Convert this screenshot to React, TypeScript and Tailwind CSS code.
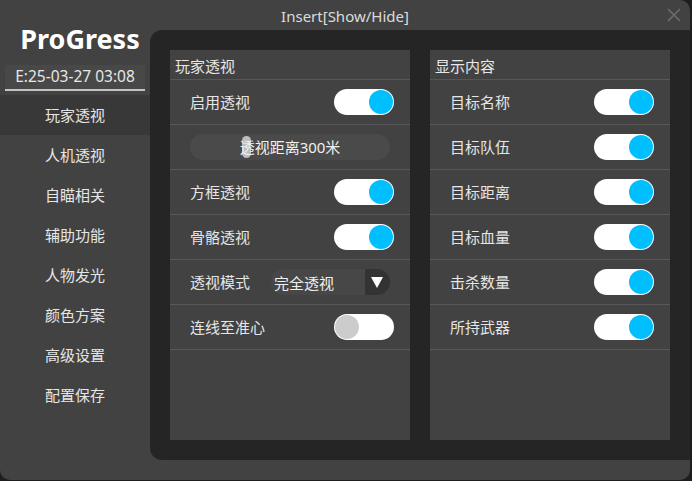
import { useState } from 'react';

const FONT = "font-['Noto_Sans','Noto_Sans_CJK_SC',sans-serif]";

const navItems = ['玩家透视', '人机透视', '自瞄相关', '辅助功能', '人物发光', '颜色方案', '高级设置', '配置保存'];

const displayItems = ['目标名称', '目标队伍', '目标距离', '目标血量', '击杀数量', '所持武器'];

// 开关
function Toggle({ on, onChange }: { on: boolean; onChange: () => void }) {
  return (
    <button
      onClick={onChange}
      className={`flex w-[60px] h-[26px] items-center rounded-full bg-white px-px ${on ? 'justify-end' : 'justify-start'}`}
    >
      <span className={`block w-[24px] h-[24px] rounded-full ${on ? 'bg-[#00bfff]' : 'bg-[#cccccc]'}`} />
    </button>
  );
}

function Row({ children }: { children: React.ReactNode }) {
  return (
    <div className="flex h-[45px] items-center justify-between border-b border-[#575757] pl-[20px] pr-[16px]">
      {children}
    </div>
  );
}

function Card({ title, children }: { title: string; children: React.ReactNode }) {
  return (
    <div className="flex-1 bg-[#424242]">
      <div className="flex h-[30px] items-center border-b border-[#575757] pl-[5px] pt-[3px] text-[15px] text-[#e8e8e8]">
        {title}
      </div>
      {children}
    </div>
  );
}

export default function App() {
  const [active, setActive] = useState(0);
  const [esp, setEsp] = useState({ enable: true, box: true, bone: true, line: false });
  const [shown, setShown] = useState<boolean[]>(displayItems.map(() => true));

  return (
    <div className={`w-[692px] h-[481px] bg-[#1c1e21] ${FONT}`}>
      <div className="relative flex w-[690px] h-[480px] rounded-tr-[10px] rounded-b-[10px] bg-[#424242]">
        {/* 标题栏 */}
        <div className="absolute left-0 right-0 top-[6px] text-center text-[15px] leading-[20px] text-[#dcdcdc]">
          Insert[Show/Hide]
        </div>

        {/* 左侧菜单 */}
        <div className="flex w-[150px] flex-col">
          <div className="pt-[22px] pl-[10px] text-center text-[27px] font-bold leading-[34px] text-white">ProGress</div>
          <div className="mx-[5px] mt-[9px] flex h-[26px] items-center justify-center border-b-2 border-[#c4c4c4] bg-[#484848] text-[15.5px] text-[#e6e6e6]">
            E:25-03-27 03:08
          </div>
          <div className="mt-[4px] flex flex-col">
            {navItems.map((item, i) => (
              <button
                key={item}
                onClick={() => setActive(i)}
                className={`h-[40px] text-center text-[15px] text-[#e6e6e6] ${i === active ? 'bg-[#383838]' : ''}`}
              >
                {item}
              </button>
            ))}
          </div>
        </div>

        {/* 右侧内容 */}
        <div className="flex flex-1 flex-col">
          <div className="flex h-[30px] items-start justify-end pr-[9px] pt-[8px]">
            <svg width="14" height="14" viewBox="0 0 14 14" className="text-[#6c6c6c]">
              <path d="M1 1 L13 13 M13 1 L1 13" stroke="currentColor" strokeWidth="1.6" />
            </svg>
          </div>
          <div className="flex h-[430px] gap-[20px] rounded-l-[12px] bg-[#252525] p-[20px]">
            <Card title="玩家透视">
              <Row>
                <span className="text-[15px] text-[#e6e6e6]">启用透视</span>
                <Toggle on={esp.enable} onChange={() => setEsp({ ...esp, enable: !esp.enable })} />
              </Row>
              <div className="flex h-[45px] items-center border-b border-[#575757] pl-[20px] pr-[20px]">
                <div className="relative flex h-[26px] flex-1 items-center justify-center rounded-full bg-[#4a4a4a]">
                  <span className="absolute left-[52px] top-[2px] h-[22px] w-[9px] rounded-full bg-[#bdbdbd]" />
                  <span className="relative text-[15px] text-[#f0f0f0]">透视距离300米</span>
                </div>
              </div>
              <Row>
                <span className="text-[15px] text-[#e6e6e6]">方框透视</span>
                <Toggle on={esp.box} onChange={() => setEsp({ ...esp, box: !esp.box })} />
              </Row>
              <Row>
                <span className="text-[15px] text-[#e6e6e6]">骨骼透视</span>
                <Toggle on={esp.bone} onChange={() => setEsp({ ...esp, bone: !esp.bone })} />
              </Row>
              <div className="flex h-[45px] items-center justify-between border-b border-[#575757] pl-[20px] pr-[20px]">
                <span className="text-[15px] text-[#e6e6e6]">透视模式</span>
                <div className="flex h-[26px] w-[119px] overflow-hidden rounded-full bg-[#474747]">
                  <span className="flex flex-1 items-center pl-[3px] pt-[2px] text-[15px] text-[#f0f0f0]">完全透视</span>
                  <span className="flex w-[25px] items-center justify-center bg-[#333333] pr-[2px]">
                    <svg width="12" height="11" viewBox="0 0 12 11">
                      <path d="M0 0 H12 L6 11 Z" fill="#ffffff" />
                    </svg>
                  </span>
                </div>
              </div>
              <Row>
                <span className="text-[15px] text-[#e6e6e6]">连线至准心</span>
                <Toggle on={esp.line} onChange={() => setEsp({ ...esp, line: !esp.line })} />
              </Row>
            </Card>
            <Card title="显示内容">
              {displayItems.map((item, i) => (
                <Row key={item}>
                  <span className="text-[15px] text-[#e6e6e6]">{item}</span>
                  <Toggle
                    on={shown[i]}
                    onChange={() => setShown(shown.map((v, j) => (j === i ? !v : v)))}
                  />
                </Row>
              ))}
            </Card>
          </div>
        </div>
      </div>
    </div>
  );
}
